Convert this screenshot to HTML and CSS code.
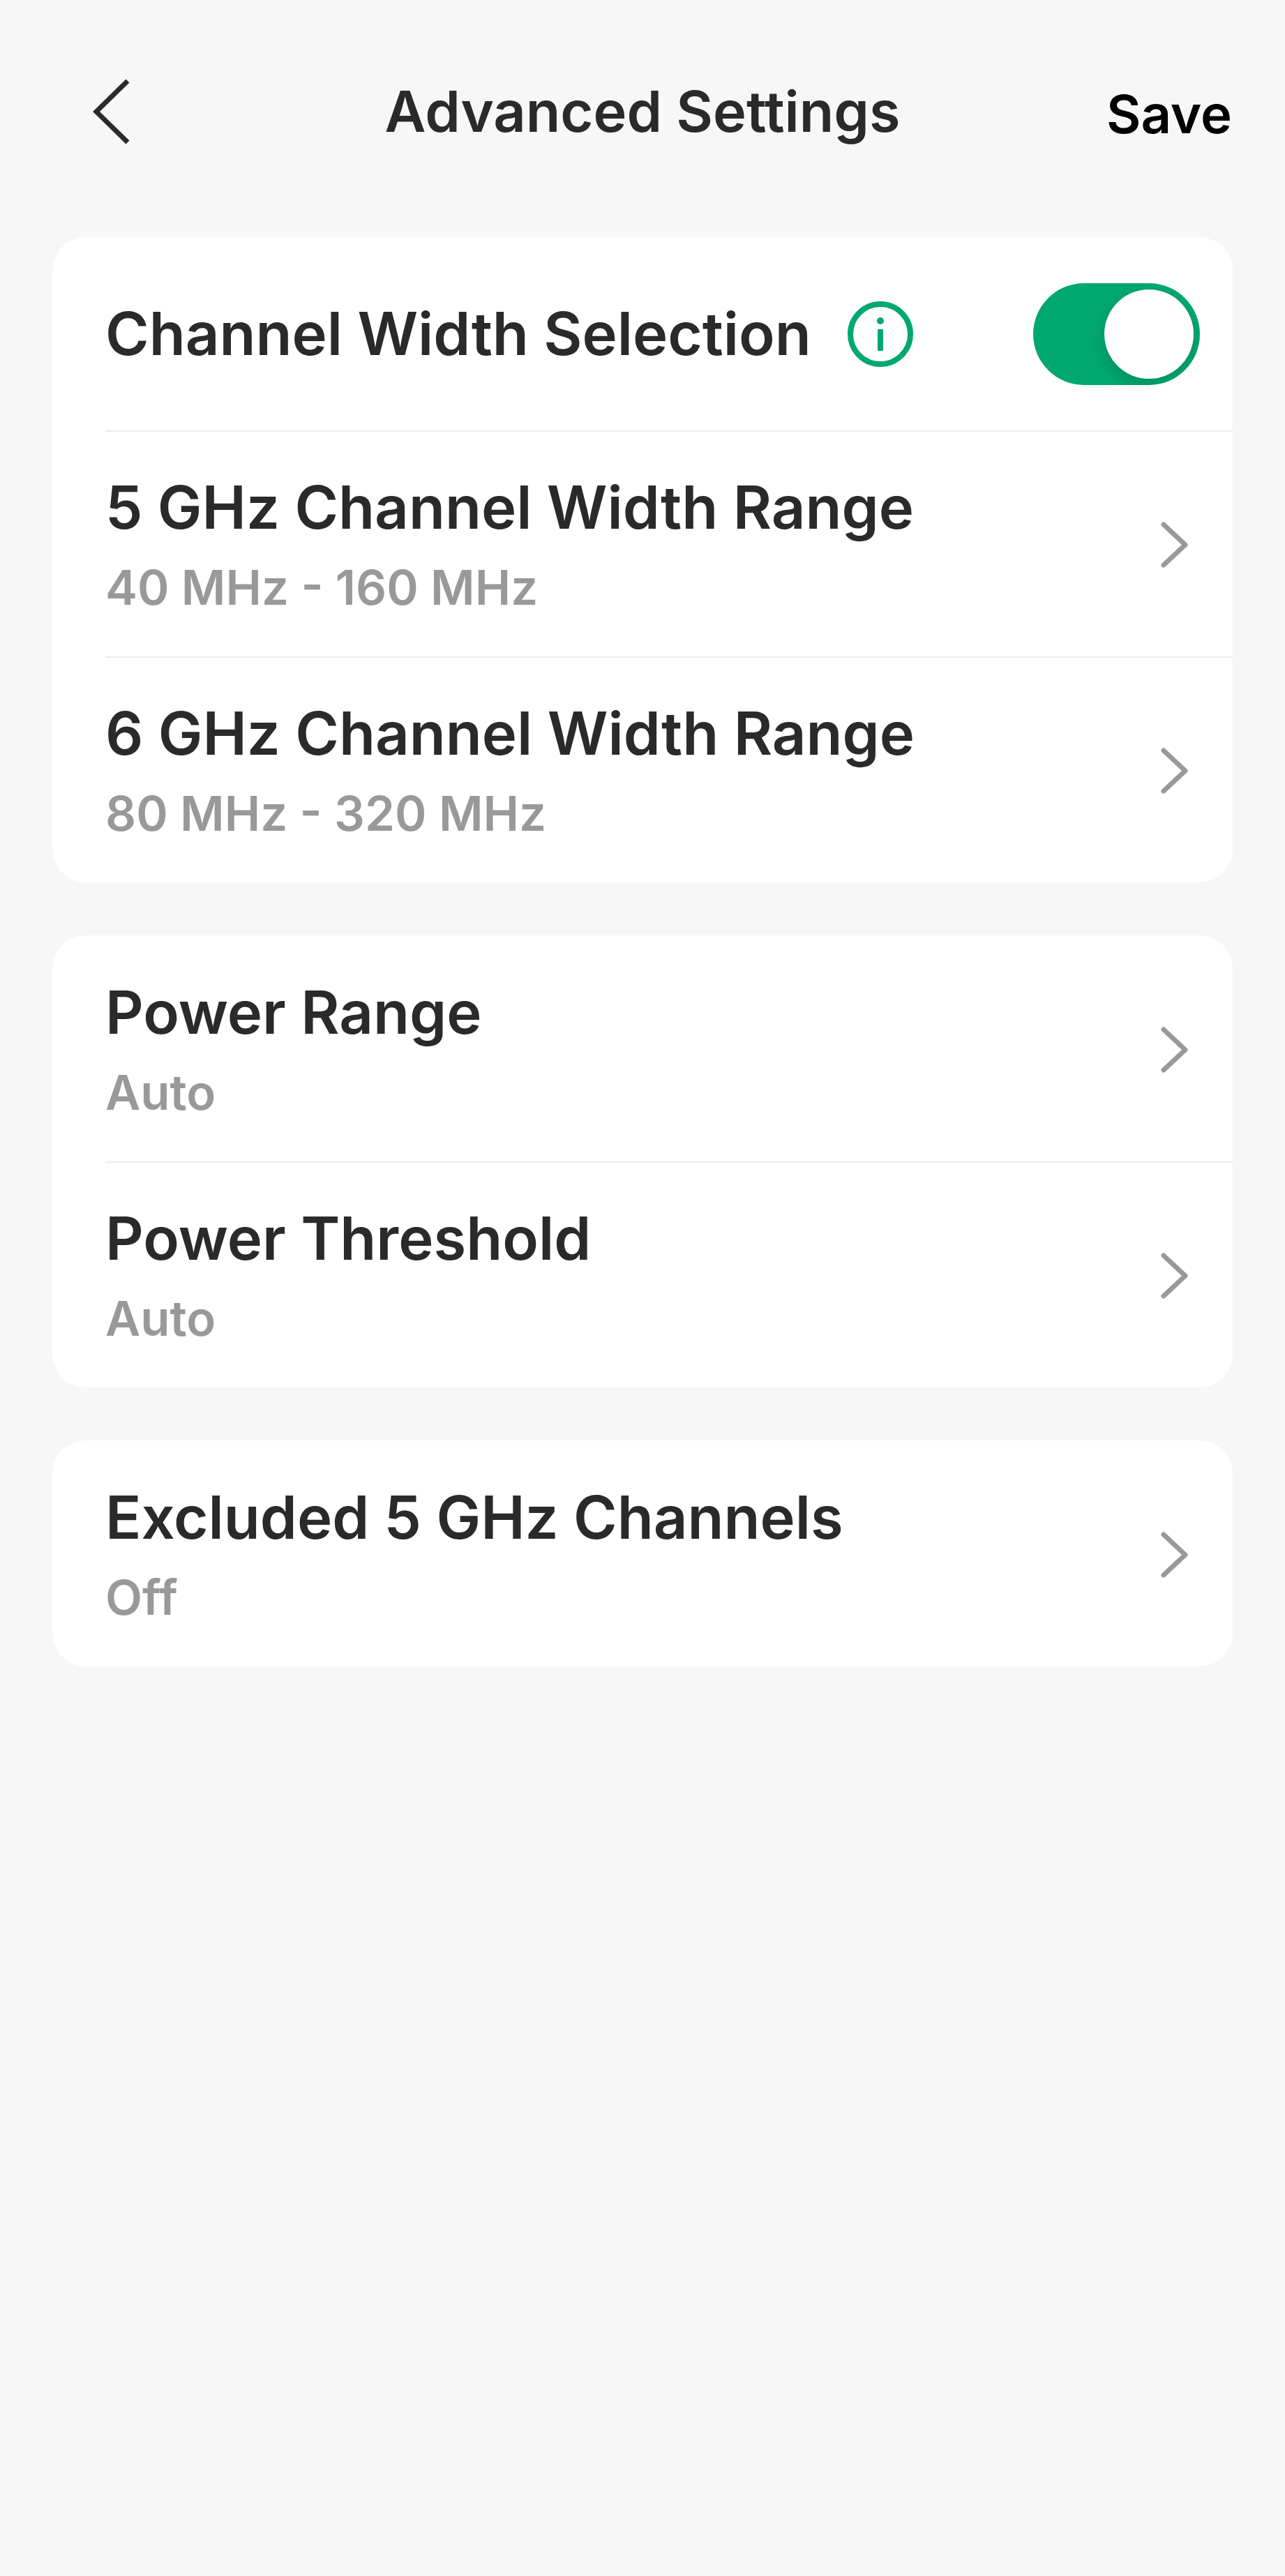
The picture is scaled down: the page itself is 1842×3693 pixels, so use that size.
FILE: index.html
```html
<!DOCTYPE html>
<html lang="en">
<head>
<meta charset="UTF-8" />
<meta name="viewport" content="width=device-width, initial-scale=1" />
<title>Advanced Settings</title>
<link rel="stylesheet" href="styles.css">
</head>

<body>
  <header>
    <button class="back" type="button" aria-label="Back">
      <svg viewBox="0 0 54 94"><path d="M51 3 L6 47 L51 91" /></svg>
    </button>
    <h1>Advanced Settings</h1>
    <button class="save" type="button">Save</button>
  </header>

  <main>
    <section class="card">
      <div class="row switch-row">
        <label class="name" for="channelWidth">Channel Width Selection</label>
        <button class="info" type="button" aria-label="About channel width selection">
          <svg viewBox="0 0 96 96">
            <circle class="ring" cx="48" cy="48" r="43" />
            <circle cx="48" cy="29" r="5" />
            <rect x="44" y="41" width="8" height="31" rx="1" />
          </svg>
        </button>
        <input class="toggle" type="checkbox" role="switch" id="channelWidth" checked>
      </div>
      <a class="row" href="#">
        <span class="text">
          <span class="name">5 GHz Channel Width Range</span>
          <span class="value">40 MHz - 160 MHz</span>
        </span>
        <svg class="chevron" viewBox="0 0 40 66"><path d="M4 4 L35 33 L4 62" /></svg>
      </a>
      <a class="row" href="#">
        <span class="text">
          <span class="name">6 GHz Channel Width Range</span>
          <span class="value">80 MHz - 320 MHz</span>
        </span>
        <svg class="chevron" viewBox="0 0 40 66"><path d="M4 4 L35 33 L4 62" /></svg>
      </a>
    </section>

    <section class="card">
      <a class="row" href="#">
        <span class="text">
          <span class="name">Power Range</span>
          <span class="value">Auto</span>
        </span>
        <svg class="chevron" viewBox="0 0 40 66"><path d="M4 4 L35 33 L4 62" /></svg>
      </a>
      <a class="row" href="#">
        <span class="text">
          <span class="name">Power Threshold</span>
          <span class="value">Auto</span>
        </span>
        <svg class="chevron" viewBox="0 0 40 66"><path d="M4 4 L35 33 L4 62" /></svg>
      </a>
    </section>

    <section class="card">
      <a class="row" href="#">
        <span class="text">
          <span class="name">Excluded 5 GHz Channels</span>
          <span class="value">Off</span>
        </span>
        <svg class="chevron" viewBox="0 0 40 66"><path d="M4 4 L35 33 L4 62" /></svg>
      </a>
    </section>
  </main>
</body>
</html>
```
FILE: styles.css
```css
* {
  box-sizing: border-box;
}
body {
  margin: 0;
  background: #f7f7f7;
  color: #2a2a2a;
  font-family: Inter, "Liberation Sans", sans-serif;
  font-weight: 600;
}
button {
  padding: 0;
  border: none;
  background: none;
  font: inherit;
  cursor: pointer;
}

/* Header */
header {
  display: grid;
  grid-template-columns: 1fr auto 1fr;
  align-items: center;
  padding: 100px 76px 0;
}
header h1 {
  margin: 0;
  font-size: 81px;
  line-height: 120px;
  font-weight: 600;
}
.back {
  justify-self: start;
  height: 94px;
  margin-left: 56px;
}
.back svg {
  display: block;
  width: 54px;
  height: 94px;
  fill: none;
  stroke: #2a2a2a;
  stroke-width: 7;
}
.save {
  justify-self: end;
  padding-top: 6px;
  color: #000;
  font-size: 76px;
  line-height: 114px;
}

/* Cards */
main {
  display: flex;
  flex-direction: column;
  gap: 76px;
  padding: 120px 75px 76px;
}
.card {
  padding-left: 76px;
  background: #fff;
  border-radius: 48px;
}
.row {
  display: flex;
  align-items: center;
  padding: 55px 63px 51px 0;
  color: inherit;
  text-decoration: none;
}
.row + .row {
  border-top: 2px solid #ececec;
  padding-top: 53px;
}
.switch-row {
  padding: 66px 47px 65px 0;
}
.text {
  display: flex;
  flex: 1;
  flex-direction: column;
  gap: 10px;
}
.name {
  font-size: 85px;
  line-height: 112px;
}
.value {
  color: #999;
  font-size: 69px;
  line-height: 96px;
}
.chevron {
  width: 40px;
  height: 66px;
  fill: none;
  stroke: #999;
  stroke-width: 7;
  stroke-linecap: round;
  stroke-linejoin: round;
}

/* Info icon */
.info {
  margin-left: 51px;
}
.info svg {
  display: block;
  width: 96px;
  height: 96px;
  fill: #00a870;
}
.info .ring {
  fill: none;
  stroke: #00a870;
  stroke-width: 8;
}

/* Switch */
.toggle {
  appearance: none;
  width: 239px;
  height: 146px;
  margin: 0 0 0 auto;
  padding: 9px;
  border-radius: 73px;
  background: #ccc;
  overflow: hidden;
  cursor: pointer;
}
.toggle::before {
  content: "";
  display: block;
  width: 128px;
  height: 128px;
  border-radius: 50%;
  background: #fff;
  box-shadow: 0 9px 24px rgb(0 0 0 / 0.15);
}
.toggle:checked {
  background: #00a870;
}
.toggle:checked::before {
  margin-left: auto;
}
```
